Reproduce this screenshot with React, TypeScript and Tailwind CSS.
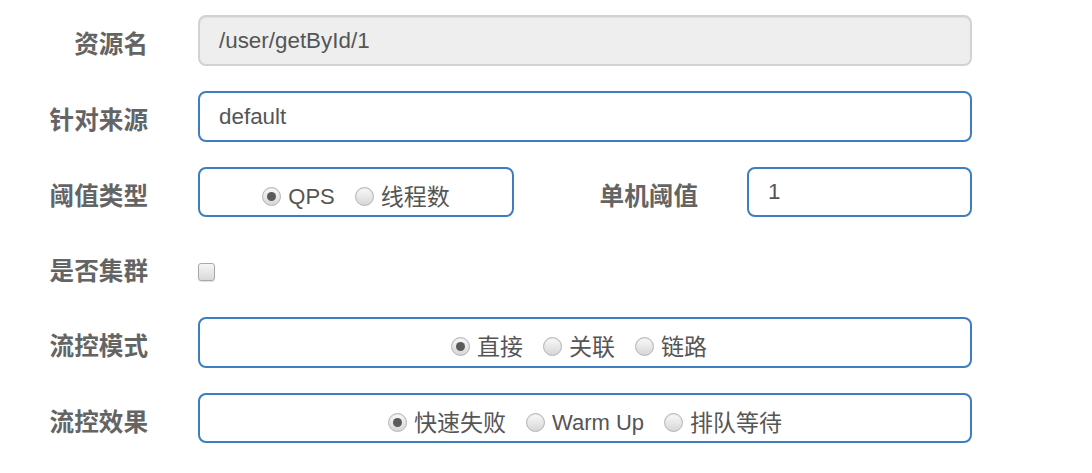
import React from "react";

function Radio({ checked, label, size, first }: { checked?: boolean; label: string; size: string; first?: boolean }) {
  return (
    <span className={"inline-flex items-center " + (first ? "" : "ml-[20px]")}>
      <span className="w-[19px] h-[19px] rounded-full border border-[#b3b3b3] bg-linear-to-b from-[#fafafa] to-[#d6d6d6] shadow-[inset_0_1px_1px_rgba(0,0,0,0.08)] flex items-center justify-center">
        {checked && <span className="w-[9px] h-[9px] rounded-full bg-[#5a5a5a]" />}
      </span>
      <span className={"ml-[7px] leading-none text-[#555] pt-[2px] " + size}>{label}</span>
    </span>
  );
}

function Label({ children, w = "w-[148px]" }: { children: React.ReactNode; w?: string }) {
  return (
    <div className={w + " shrink-0 text-right pt-[10px] text-[24.6px] leading-none font-bold text-[#646464]"}>{children}</div>
  );
}

export default function App() {
  return (
    <div className="w-[1092px] h-[473px] bg-white font-['Liberation_Sans','Noto_Sans_CJK_SC',sans-serif]">
      <div className="flex flex-col gap-[25px] pt-[15px]">
        <div className="flex items-center h-[51px]">
          <Label>资源名</Label>
          <div className="ml-[50px] w-[774px] h-full rounded-[8px] border-2 border-[#d2d2d2] bg-[#eeeeee] flex items-center pl-[19px] text-[22.4px] text-[#555] shadow-[inset_0_1px_1px_rgba(0,0,0,0.06)]">
            /user/getById/1
          </div>
        </div>
        <div className="flex items-center h-[51px]">
          <Label>针对来源</Label>
          <div className="ml-[50px] w-[774px] h-full rounded-[8px] border-2 border-[#3d7ec0] bg-white flex items-center pl-[19px] text-[22.4px] text-[#555]">
            default
          </div>
        </div>
        <div className="flex items-center h-[50px]">
          <Label>阈值类型</Label>
          <div className="ml-[50px] w-[316px] h-full rounded-[8px] border-2 border-[#3d7ec0] bg-white flex items-center justify-center pt-[8px]">
            <Radio first checked label="QPS" size="text-[22px]" />
            <Radio label="线程数" size="text-[23px]" />
          </div>
          <Label w="w-[184px]">单机阈值</Label>
          <div className="ml-[49px] w-[225px] h-full rounded-[8px] border-2 border-[#3d7ec0] bg-white flex items-center pl-[19px] text-[22.4px] text-[#555]">
            1
          </div>
        </div>
        <div className="flex items-center h-[50px]">
          <Label>是否集群</Label>
          <div className="ml-[50px] mt-[10px] w-[17px] h-[18px] rounded-[3px] border border-[#a9a9a9] bg-linear-to-b from-[#f5f5f5] to-[#d9d9d9] shadow-[0_1px_1px_rgba(0,0,0,0.12)]" />
        </div>
        <div className="flex items-center h-[51px]">
          <Label>流控模式</Label>
          <div className="ml-[50px] w-[774px] h-full rounded-[8px] border-2 border-[#3d7ec0] bg-white flex items-center justify-center pt-[8px] pr-[12px]">
            <Radio first checked label="直接" size="text-[23px]" />
            <Radio label="关联" size="text-[23px]" />
            <Radio label="链路" size="text-[23px]" />
          </div>
        </div>
        <div className="flex items-center h-[50px]">
          <Label>流控效果</Label>
          <div className="ml-[50px] w-[774px] h-full rounded-[8px] border-2 border-[#3d7ec0] bg-white flex items-center justify-center pt-[8px]">
            <Radio first checked label="快速失败" size="text-[23px]" />
            <Radio label="Warm Up" size="text-[22px]" />
            <Radio label="排队等待" size="text-[23px]" />
          </div>
        </div>
      </div>
    </div>
  );
}
